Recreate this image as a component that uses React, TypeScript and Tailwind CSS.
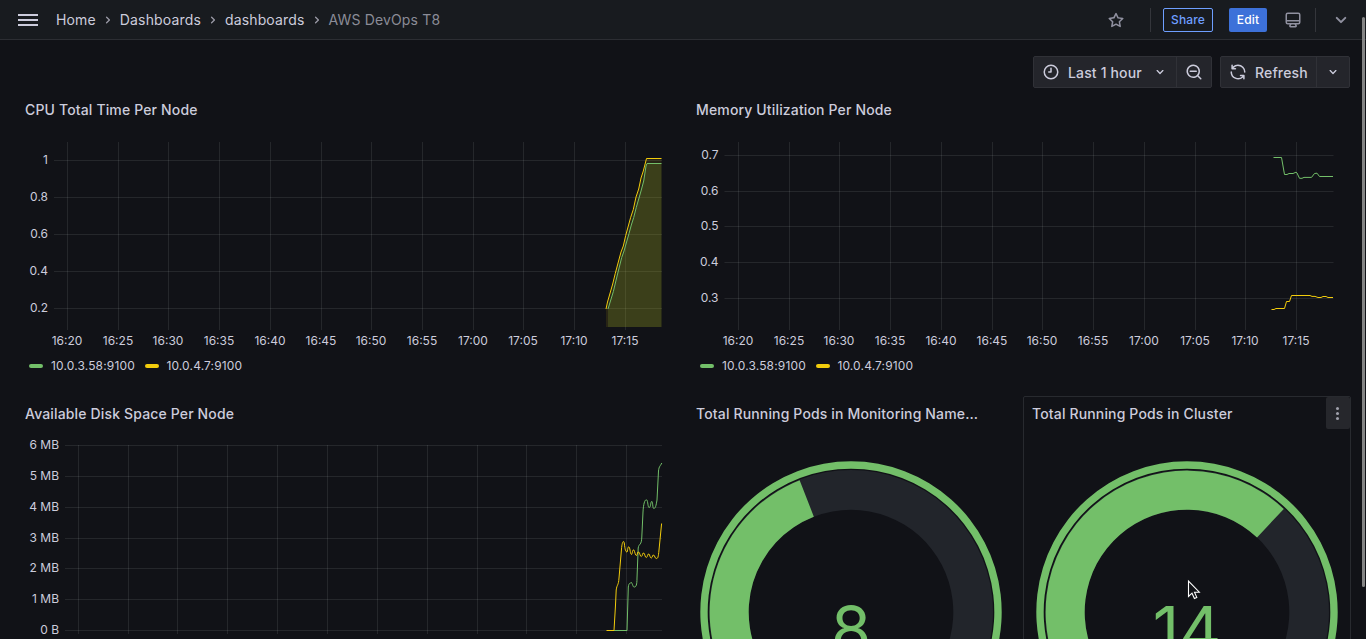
import React from "react";

const GREEN = "#73bf69";
const YELLOW = "#f2cc0c";
const GRID = "rgba(240,250,255,0.09)";
const TEXT = "#ccccdc";

const icons = {
  star: "M22,9.67A1,1,0,0,0,21.14,9l-5.69-.83L12.9,3a1,1,0,0,0-1.8,0L8.55,8.16,2.86,9a1,1,0,0,0-.81.68,1,1,0,0,0,.25,1l4.13,4-1,5.68A1,1,0,0,0,6.9,21.44L12,18.77l5.1,2.67a.93.93,0,0,0,.46.12,1,1,0,0,0,.59-.19,1,1,0,0,0,.4-1l-1-5.68,4.13-4A1,1,0,0,0,22,9.67Zm-6.15,4a1,1,0,0,0-.29.88l.72,4.2-3.76-2a1.06,1.06,0,0,0-.94,0l-3.76,2,.72-4.2a1,1,0,0,0-.29-.88l-3-3,4.21-.61a1,1,0,0,0,.76-.55L12,5.7l1.88,3.82a1,1,0,0,0,.76.55l4.21.61Z",
  monitor:
    "M19,2H5A3,3,0,0,0,2,5V15a3,3,0,0,0,3,3H7.64l-.58,1a2,2,0,0,0,0,2,2,2,0,0,0,1.75,1h6.46A2,2,0,0,0,17,21a2,2,0,0,0,0-2l-.59-1H19a3,3,0,0,0,3-3V5A3,3,0,0,0,19,2ZM8.77,20,10,18H14l1.2,2ZM20,15a1,1,0,0,1-1,1H5a1,1,0,0,1-1-1V14H20Zm0-3H4V5A1,1,0,0,1,5,4H19a1,1,0,0,1,1,1Z",
  down: "M17,9.17a1,1,0,0,0-1.41,0L12,12.71,8.46,9.17a1,1,0,0,0-1.41,0,1,1,0,0,0,0,1.42l4.24,4.24a1,1,0,0,0,1.42,0L17,10.59A1,1,0,0,0,17,9.17Z",
  right:
    "M14.83,11.29,10.59,7.05a1,1,0,0,0-1.42,0,1,1,0,0,0,0,1.41L12.71,12,9.17,15.54a1,1,0,0,0,0,1.41,1,1,0,0,0,.71.29,1,1,0,0,0,.71-.29l4.24-4.24A1,1,0,0,0,14.83,11.29Z",
  clock:
    "M12,2A10,10,0,1,0,22,12,10,10,0,0,0,12,2Zm0,18a8,8,0,1,1,8-8A8,8,0,0,1,12,20ZM12,6a1,1,0,0,0-1,1v4H9a1,1,0,0,0,0,2h3a1,1,0,0,0,1-1V7A1,1,0,0,0,12,6Z",
  zoomOut:
    "M21.71,20.29,18,16.61A9,9,0,1,0,16.61,18l3.68,3.68a1,1,0,0,0,1.42,0A1,1,0,0,0,21.71,20.29ZM11,18a7,7,0,1,1,7-7A7,7,0,0,1,11,18Zm4-8H7a1,1,0,0,0,0,2h8a1,1,0,0,0,0-2Z",
  sync: "M19.91,15.51H15.38a1,1,0,0,0,0,2h2.4A8,8,0,0,1,4,12a1,1,0,0,0-2,0,10,10,0,0,0,16.88,7.23V21a1,1,0,0,0,2,0V16.5A1,1,0,0,0,19.91,15.51ZM12,2A10,10,0,0,0,5.12,4.77V3a1,1,0,0,0-2,0V7.5a1,1,0,0,0,1,1h4.5a1,1,0,0,0,0-2H6.22A8,8,0,0,1,20,12a1,1,0,0,0,2,0A10,10,0,0,0,12,2Z",
};

function Icon({ name, size = 18, className = "" }: { name: keyof typeof icons; size?: number; className?: string }) {
  return (
    <svg width={size} height={size} viewBox="0 0 24 24" fill="currentColor" className={`shrink-0 ${className}`}>
      <path d={icons[name]} />
    </svg>
  );
}

function Header() {
  const crumbs = ["Home", "Dashboards", "dashboards"];
  return (
    <header className="flex h-10 items-center border-b border-[#2c2e33] bg-[#181b1f] pl-[18px] pr-4">
      <div className="flex w-5 flex-col gap-[3px]">
        <div className="h-0.5 bg-[#ccccdc]" />
        <div className="h-0.5 bg-[#ccccdc]" />
        <div className="h-0.5 bg-[#ccccdc]" />
      </div>
      <nav className="ml-[18px] flex items-center text-sm tracking-[0.15px]">
        {crumbs.map((c) => (
          <React.Fragment key={c}>
            <span>{c}</span>
            <Icon name="right" size={16} className="mx-1 text-[#9a9aa6]" />
          </React.Fragment>
        ))}
        <span className="text-[#8b8c97]">AWS DevOps T8</span>
      </nav>
      <div className="ml-auto flex items-center text-xs font-medium tracking-[0.15px]">
        <Icon name="star" className="text-[#9091a0]" />
        <div className="ml-[25px] h-6 w-px bg-[#34363b]" />
        <button className="ml-3 h-6 w-[50px] rounded-xs border border-[#6e9fff] text-[#6e9fff]">Share</button>
        <button className="ml-4 h-6 w-[38px] rounded-xs bg-[#3d71d9] text-white">Edit</button>
        <Icon name="monitor" className="ml-[17px] text-[#9091a0]" />
        <div className="ml-[13px] h-6 w-px bg-[#34363b]" />
        <Icon name="down" size={24} className="-mr-[3px] ml-[13px] text-[#9091a0]" />
      </div>
    </header>
  );
}

function Toolbar() {
  return (
    <div className="flex h-8 justify-end gap-2 pr-4 text-sm font-medium tracking-[0.15px]">
      <div className="flex w-[179px] rounded-xs border border-[#303137] bg-[#24252b]">
        <button className="flex w-[143px] items-center border-r border-[#303137] pl-2">
          <Icon name="clock" />
          <span className="ml-2 pt-0.5">Last 1 hour</span>
          <Icon name="down" size={16} className="ml-2.5" />
        </button>
        <button className="flex flex-1 items-center justify-center">
          <Icon name="zoomOut" />
        </button>
      </div>
      <div className="flex w-[130px] rounded-xs border border-[#303137] bg-[#24252b]">
        <button className="flex w-[96px] items-center border-r border-[#303137] pl-2">
          <Icon name="sync" />
          <span className="ml-2 pt-0.5">Refresh</span>
        </button>
        <button className="flex flex-1 items-center justify-center">
          <Icon name="down" size={16} />
        </button>
      </div>
    </div>
  );
}

function Panel({ title, active, children }: { title: string; active?: boolean; children: React.ReactNode }) {
  return (
    <section
      className={`flex min-w-0 flex-col overflow-hidden rounded-xs border ${active ? "border-[#282a2f]" : "border-transparent"}`}
    >
      <div className="flex h-8 shrink-0 items-center justify-between pl-2">
        <h2 className="truncate pt-0.5 text-sm font-medium tracking-[0.15px]">{title}</h2>
        {active && (
          <button className="flex h-8 w-6 flex-col items-center justify-center gap-0.5 rounded-xs bg-[#26272c] pr-px">
            <span className="size-[3px] rounded-full bg-[#9fa0ab]" />
            <span className="size-[3px] rounded-full bg-[#9fa0ab]" />
            <span className="size-[3px] rounded-full bg-[#9fa0ab]" />
          </button>
        )}
      </div>
      {children}
    </section>
  );
}

function Legend() {
  return (
    <div className="flex items-center pl-3 text-xs leading-[18px] tracking-[0.15px]">
      <span className="h-1 w-3.5 rounded-full bg-[#73bf69]" />
      <span className="ml-2">10.0.3.58:9100</span>
      <span className="ml-2.5 h-1 w-3.5 rounded-full bg-[#f2cc0c]" />
      <span className="ml-[7.5px]">10.0.4.7:9100</span>
    </div>
  );
}

type Tick = [number, string];

function Chart(props: {
  x: number;
  y: number;
  height: number;
  left: number;
  right: number;
  top: number;
  bottom: number;
  xs: number[];
  ys: Tick[];
  showTimes?: boolean;
  children: React.ReactNode;
}) {
  const { x, y, height, left, right, top, bottom, xs, ys, showTimes, children } = props;
  const times = ["16:20", "16:25", "16:30", "16:35", "16:40", "16:45", "16:50", "16:55", "17:00", "17:05", "17:10", "17:15"];
  return (
    <svg width={660} height={height} viewBox={`${x} ${y} 660 ${height}`} className="block shrink-0 text-xs" fontFamily="Inter">
      {xs.map((v) => (
        <line key={v} x1={v + 0.5} x2={v + 0.5} y1={top} y2={bottom} stroke={GRID} />
      ))}
      {ys.map(([v, label]) => (
        <g key={label}>
          <line x1={left} x2={right} y1={v + 0.5} y2={v + 0.5} stroke={GRID} />
          <text x={left - 6} y={v + 4} textAnchor="end" fill={TEXT}>
            {label}
          </text>
        </g>
      ))}
      {showTimes &&
        xs.map((v, i) => (
          <text key={v} x={v} y={345} textAnchor="middle" fill={TEXT}>
            {times[i]}
          </text>
        ))}
      {children}
    </svg>
  );
}

function CpuChart() {
  const yellow =
    "606,309 607.5,302 612.7,284 615.3,273.3 621,252 623.3,246 625.7,235.5 630.7,217.3 633.3,209.5 636,197 638.7,189 641,178 643.3,171 646.5,158.5";
  const green =
    "608,309 613.3,291.7 617.3,275 621.7,257.5 624,251 629,233.5 631.3,225 633.7,217.5 636.3,207.3 639,198 641,191 643.7,181 646,166 647,163.5";
  return (
    <Chart
      x={17} y={125} height={232} left={54} right={662} top={142} bottom={330} showTimes
      xs={[67, 118, 168, 219, 270, 321, 371, 422, 473, 523, 574, 625]}
      ys={[[160, "1"], [197, "0.8"], [234, "0.6"], [271, "0.4"], [308, "0.2"]]}
    >
      <polygon points={`606,327 ${yellow} 661.5,158.5 661.5,327`} fill={YELLOW} fillOpacity={0.1} />
      <polygon points={`608,327 ${green} 661.5,163.5 661.5,327`} fill="#90b030" fillOpacity={0.19} />
      <polyline points={`${green} 661.5,163.5`} fill="none" stroke={GREEN} />
      <polyline points={`${yellow} 661.5,158.5`} fill="none" stroke={YELLOW} />
    </Chart>
  );
}

function MemoryChart() {
  return (
    <Chart
      x={688} y={125} height={232} left={724.5} right={1333.5} top={142} bottom={330} showTimes
      xs={[738, 789, 839, 890, 941, 992, 1042, 1093, 1144, 1195, 1245, 1296]}
      ys={[[155, "0.7"], [191, "0.6"], [226, "0.5"], [262, "0.4"], [298, "0.3"]]}
    >
      <polyline
        points="1273.5,157.5 1281.5,157.5 1284.5,174.5 1287,174.5 1289,173.5 1293,173.5 1296,172.2 1297,173 1299.5,178.3 1302,178.3 1304,177.4 1311.5,177.4 1314.5,173.5 1317,173.2 1319.5,176.5 1333,176.5"
        fill="none" stroke={GREEN}
      />
      <polyline
        points="1271.5,309.5 1274,309.5 1276,308.5 1284.5,308.5 1286.5,301.5 1289.5,301.5 1291.5,295.5 1310,295.5 1312,296.4 1315,296.4 1318,297.5 1321,297.5 1323,296.5 1326,296.5 1328,297.5 1333,297.5"
        fill="none" stroke={YELLOW}
      />
    </Chart>
  );
}

function DiskChart() {
  return (
    <Chart
      x={17} y={429} height={212} left={65} right={662} top={445} bottom={634}
      xs={[78, 128, 177, 227, 277, 327, 377, 427, 477, 526, 576, 626]}
      ys={[[445, "6 MB"], [476, "5 MB"], [507, "4 MB"], [538, "3 MB"], [568, "2 MB"], [599, "1 MB"], [630, "0 B"]]}
    >
      <path
        d="M607,630.5H627L628.3,587C629,582 630.5,583.5 631.5,582.5C633,585 633,587.5 634.5,587C636,587 637,585 637,578L638.2,548C639,543 641.5,546 641.8,537L643,512C643.5,503 645,499 646.8,500C648,501 647.8,508 649.3,507.5C651,507 650.5,501 652,501.5C653,503 652.5,509 654,508.5C655.5,508 656,506 657,500L658.5,471C659,466 660.5,466 661.8,463"
        fill="none" stroke={GREEN}
      />
      <path
        d="M606.5,630.5H614L615.5,605L616.2,590C617,584 618.5,586 619,578L621.5,549C622,542 623.8,539 624.4,544C625,549 625.5,552 627,552C627.8,551 627.5,546 629,547C630.5,549 630,554 631.5,554.5C632.5,554 632.3,549 633.8,550C635.2,552 635,555.5 636.5,555.5C638,554 637,551.5 638.7,552C640,553 640,556.5 641.3,556.5C642.8,556 642.2,552.5 643.7,553C645,554 645,557.5 646.3,557.5C648,557 647.3,553.5 648.8,554C650,555 650,558 651.3,558C652.8,557.5 652.3,554.5 653.6,555C655,556 655,558.5 656.3,558.5C658,558.5 658.3,557 659,550L661.6,523.5"
        fill="none" stroke={YELLOW}
      />
    </Chart>
  );
}

// Point on a circle; angle in degrees clockwise from twelve o'clock.
function polar(cx: number, cy: number, r: number, deg: number) {
  const a = (deg * Math.PI) / 180;
  return `${(cx + r * Math.sin(a)).toFixed(2)},${(cy - r * Math.cos(a)).toFixed(2)}`;
}

function ring(cx: number, cy: number, r1: number, r2: number, from: number, to: number) {
  const large = to - from > 180 ? 1 : 0;
  return `M${polar(cx, cy, r1, from)}A${r1},${r1},0,${large},1,${polar(cx, cy, r1, to)}L${polar(cx, cy, r2, to)}A${r2},${r2},0,${large},0,${polar(cx, cy, r2, from)}Z`;
}

function Gauge({ value, angle, textX }: { value: string; angle: number; textX: number }) {
  const cx = 163;
  const cy = 183;
  return (
    <svg width={326} height={330} viewBox="0 0 326 330" className="block shrink-0">
      <path d={ring(cx, cy, 102.3, 142, -125, 125)} fill="#22252b" />
      <path d={ring(cx, cy, 102.3, 141.4, -125, angle)} fill={GREEN} />
      <path d={ring(cx, cy, 143.3, 150.7, -125, 125)} fill={GREEN} />
      <text x={textX} y={223.5} textAnchor="middle" fontSize={65} fontFamily="Inter" fill={GREEN}>
        {value}
      </text>
    </svg>
  );
}

export default function App() {
  return (
    <div className="relative h-[639px] w-[1366px] overflow-hidden bg-[#111217] font-['Inter',sans-serif] text-[#ccccdc]">
      <Header />
      <main className="pt-4">
        <Toolbar />
        <div className="mt-1 grid w-[1351px] grid-cols-[663px_664px] grid-rows-[296px_330px] gap-2 pl-4">
          <Panel title="CPU Total Time Per Node">
            <CpuChart />
            <Legend />
          </Panel>
          <Panel title="Memory Utilization Per Node">
            <MemoryChart />
            <Legend />
          </Panel>
          <Panel title="Available Disk Space Per Node">
            <DiskChart />
          </Panel>
          <div className="grid grid-cols-2 gap-2">
            <Panel title="Total Running Pods in Monitoring Name…">
              <Gauge value="8" angle={-21.3} textX={163} />
            </Panel>
            <Panel title="Total Running Pods in Cluster" active>
              <Gauge value="14" angle={43.2} textX={163} />
            </Panel>
          </div>
        </div>
      </main>
      <div className="absolute left-[1362px] top-[17px] h-[570px] w-[3px] rounded-full bg-[#858585]" />
      <svg className="absolute left-[1187px] top-[579px]" width="14" height="22" viewBox="0 0 14 22">
        <path d="M1.5,2V17.5L5,14.2L7.4,19.5L9.8,18.4L7.5,13.2H12.3Z" fill="#111217" stroke="#fff" strokeWidth="1.1" />
      </svg>
    </div>
  );
}
